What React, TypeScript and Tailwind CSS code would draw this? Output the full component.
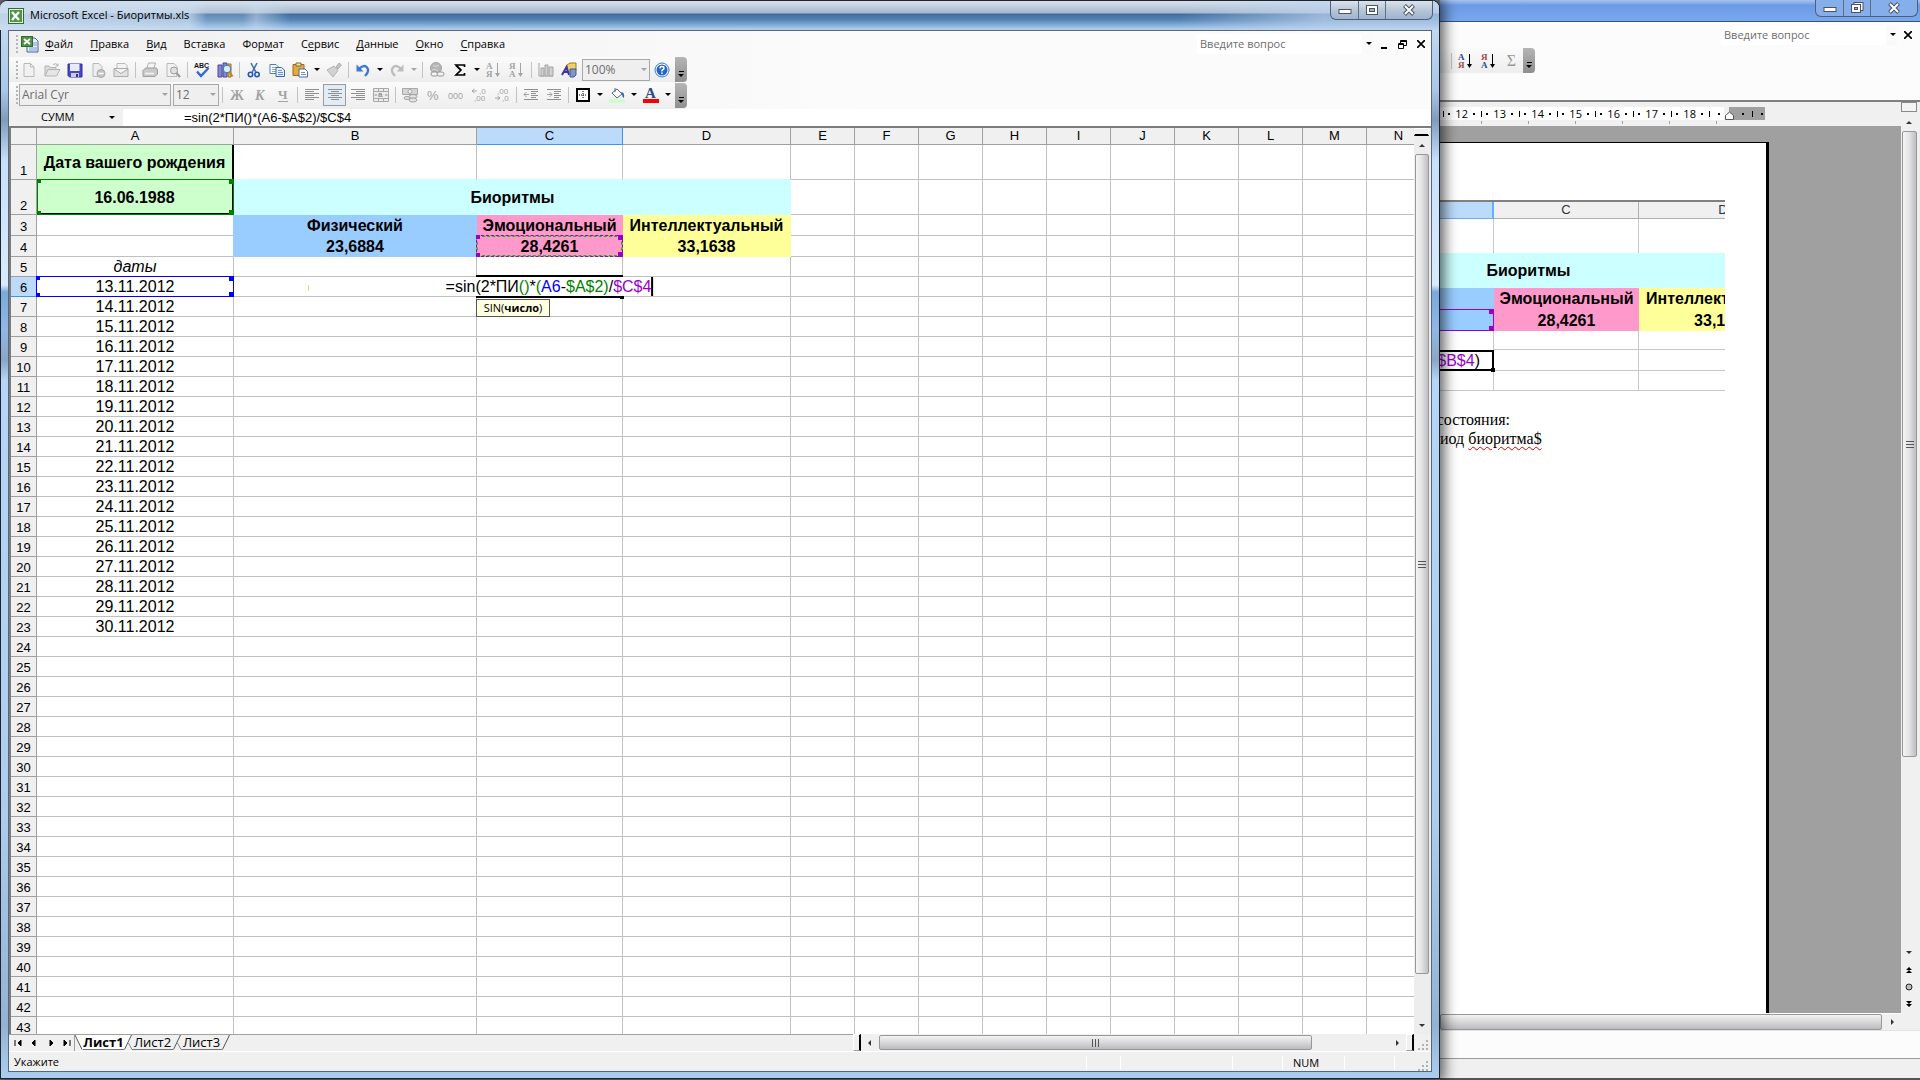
import type { ReactNode } from "react";
import clsx from "clsx";

type IconName =
  | "new" | "open" | "save" | "permission" | "mail" | "print" | "preview"
  | "spelling" | "research" | "cut" | "copy" | "paste" | "brush" | "undo"
  | "redo" | "link" | "sum" | "sortAsc" | "sortDesc" | "chart" | "drawing"
  | "help" | "bold" | "italic" | "underline" | "left" | "center" | "right"
  | "merge" | "currency" | "percent" | "thousands" | "incDecimal"
  | "decDecimal" | "outdent" | "indent" | "borders" | "fill" | "fontColor";

type Tool = IconName | "|" | "v" | "v-off";

const GRAY = "#a3a3a3";

const lines = (rows: number[][], color = "#8f8f8f") =>
  rows.map(([x, y, w]) => (
    <rect key={`${x}-${y}`} x={x} y={y} width={w} height="1" fill={color} />
  ));

const sortIcon = (top: string, bottom: string, topColor: string, bottomColor: string, arrow: string) => (
  <>
    <text x="0" y="7" fontSize="9" fontWeight="bold" fontFamily="Liberation Serif, serif" fill={topColor}>{top}</text>
    <text x="0" y="15" fontSize="9" fontWeight="bold" fontFamily="Liberation Serif, serif" fill={bottomColor}>{bottom}</text>
    <path d="M11.500 1v11" stroke={arrow} />
    <path d="M9 11h5l-2.500 4z" fill={arrow} />
  </>
);

const icons: Record<IconName, ReactNode> = {
  new: <path d="M3 1.500h6.500l3.500 3.500v9.500H3zM9.500 1.500V5H13" fill="#f1f1f1" stroke="#b9b9b9" />,
  open: (
    <>
      <path d="M1 14V4h4l1 1.500h6V8" fill="#dcdcdc" stroke="#b3b3b3" />
      <path d="M1 14l3-6.500h12L12.500 14z" fill="#e6e6e6" stroke="#b3b3b3" />
      <path d="M9 2.500q3-2 5 1m0-2v2.500h-2.500" fill="none" stroke="#b3b3b3" />
    </>
  ),
  save: (
    <>
      <path d="M1 2h14v13H2.500L1 13.500z" fill="#4747c4" stroke="#30309a" />
      <rect x="3" y="2" width="9.500" height="7" fill="#e9ecff" />
      <rect x="4" y="11" width="8" height="4" fill="#c9cde8" />
      <rect x="9" y="12" width="2" height="3" fill="#30309a" />
    </>
  ),
  permission: (
    <>
      <path d="M3 1.500h6l3 3v10H3z" fill="#eeeeee" stroke="#b9b9b9" />
      <circle cx="11" cy="11.500" r="4" fill="#c4c4c4" stroke="#a9a9a9" />
      <path d="M8.500 11.500h5" stroke="#fff" strokeWidth="1.500" />
    </>
  ),
  mail: (
    <>
      <path d="M4 6V1.500h8l2 2V6" fill="#f4f4f4" stroke="#b9b9b9" />
      <path d="M1 6.500h14v8H1zM1 7l7 4.500L15 7" fill="#e2e2e2" stroke="#ababab" />
    </>
  ),
  print: (
    <>
      <path d="M5 6l1.500-5h7L12 6" fill="#f4f4f4" stroke="#b0b0b0" />
      <path d="M1 8.500L3.500 6h11l1 2v4l-2.500 2.500H1z" fill="#c9c9c9" stroke="#9f9f9f" />
      <path d="M3 11.500h9" stroke="#f5f5f5" strokeWidth="1.500" />
    </>
  ),
  preview: (
    <>
      <path d="M2 1.500h7l3 3v10H2z" fill="#f1f1f1" stroke="#b9b9b9" />
      <circle cx="9" cy="8.500" r="3.500" fill="#e0e0e0" stroke="#9b9b9b" />
      <path d="M11.500 11l3.500 4" stroke="#9b9b9b" strokeWidth="2" />
    </>
  ),
  spelling: (
    <>
      <text x="0" y="6" fontSize="7" fontWeight="bold" fontFamily="Liberation Sans, sans-serif" fill="#111">ABC</text>
      <path d="M3 9.500l4 4.500L14.500 6" fill="none" stroke="#2f6be0" strokeWidth="2.400" />
    </>
  ),
  research: (
    <>
      <path d="M1 3h4v12H1zM6 1h4v14H6z" fill="#8a86d6" stroke="#4a4694" />
      <path d="M11 2h3v13h-3z" fill="#e6b85a" stroke="#9b6d1e" />
      <circle cx="10" cy="7" r="3.800" fill="#d7ecff" stroke="#3c74b8" />
      <path d="M12.500 10l3 4.500" stroke="#c08428" strokeWidth="2.200" />
    </>
  ),
  cut: (
    <>
      <path d="M5 1l5 9.500M11 1L6 10.500" stroke="#4470b8" strokeWidth="1.600" />
      <circle cx="4.500" cy="12.500" r="2.200" fill="none" stroke="#2454c0" strokeWidth="1.600" />
      <circle cx="11" cy="12.500" r="2.200" fill="none" stroke="#2454c0" strokeWidth="1.600" />
    </>
  ),
  copy: (
    <>
      <path d="M1 2.500h6l2 2v7H1z" fill="#fff" stroke="#4f7cc0" />
      {lines([[3, 5, 4], [3, 7, 4], [3, 9, 4]], "#86a8da")}
      <path d="M7 5.500h5.500l3 2.500v6.500H7z" fill="#e9f1fd" stroke="#3766b0" />
      {lines([[9, 8, 4], [9, 10, 5], [9, 12, 5]], "#6b93cf")}
    </>
  ),
  paste: (
    <>
      <path d="M1 2.500h11v11H1z" fill="#e5a93c" stroke="#9c6a19" />
      <path d="M4 1h5v3H4z" fill="#f3e3b4" stroke="#7b6a3e" />
      <path d="M7 7h6l2.500 2.500V15H7z" fill="#fff" stroke="#4b6ca6" />
      {lines([[9, 10, 4], [9, 12, 5]], "#6b93cf")}
    </>
  ),
  brush: (
    <>
      <path d="M10 5l3-4 2.500 2-3.500 4z" fill="#c4c4c4" stroke="#b0b0b0" />
      <path d="M1 8l7-4 4 4.500-5 6.500z" fill="#d2d2d2" stroke="#b3b3b3" />
    </>
  ),
  undo: (
    <>
      <path d="M4 7q5-5 8-1.500t-2 8.500" fill="none" stroke="#3d78d8" strokeWidth="2.400" />
      <path d="M1.500 2.500v7h7z" fill="#3d78d8" />
    </>
  ),
  redo: (
    <>
      <path d="M12 7Q7 2 4 5.500t2 8.500" fill="none" stroke="#bdbdbd" strokeWidth="2.400" />
      <path d="M14.500 2.500v7h-7z" fill="#bdbdbd" />
    </>
  ),
  link: (
    <>
      <circle cx="7" cy="6" r="5.500" fill="#b5b5b5" stroke="#a3a3a3" />
      <path d="M4 3q3 3 6 0M3 8q3-2 6 1" fill="none" stroke="#d9d9d9" />
      <rect x="2" y="10" width="7" height="4" rx="2" fill="#f3f3f3" stroke="#969696" />
      <rect x="8" y="10" width="7" height="4" rx="2" fill="#f3f3f3" stroke="#969696" />
    </>
  ),
  sum: <path d="M12.500 5V3H4l5 5-5 5h8.500v-2M4 3.500L8.500 8" fill="none" stroke="#000" strokeWidth="1.700" />,
  sortAsc: sortIcon("А", "Я", GRAY, GRAY, GRAY),
  sortDesc: sortIcon("Я", "А", GRAY, GRAY, GRAY),
  chart: (
    <>
      <path d="M1 1v13h14" fill="none" stroke="#a3a3a3" />
      <path d="M3 6h3v8H3zM7 3h3v11H7zM11 5h4v9h-4z" fill="#d0d0d0" stroke="#a3a3a3" />
    </>
  ),
  drawing: (
    <>
      <path d="M6 3l3-2h6v7l-2 2H6z" fill="#f1cf6b" stroke="#a17a21" />
      <path d="M9 7h6v6l-2 2H9z" fill="#7f97c9" stroke="#44598f" />
      <path d="M1 13l4.500-8L8 13M3 10h4" fill="none" stroke="#3c35a0" strokeWidth="2" />
    </>
  ),
  help: (
    <>
      <circle cx="8" cy="8" r="7" fill="#fff" stroke="#3c74c8" />
      <circle cx="8" cy="8" r="5.500" fill="#2363cc" />
      <path d="M6 6.500q0-2 2-2t2 1.700q0 1-1.200 1.500T8 9.500M8 10.500v1.500" fill="none" stroke="#fff" strokeWidth="1.500" />
    </>
  ),
  bold: <text x="1" y="13" fontSize="14" fontWeight="bold" fontFamily="Liberation Serif, serif" fill={GRAY}>Ж</text>,
  italic: <text x="3" y="13" fontSize="14" fontWeight="bold" fontStyle="italic" fontFamily="Liberation Serif, serif" fill={GRAY}>К</text>,
  underline: (
    <>
      <text x="3" y="12" fontSize="13" fontWeight="bold" fontFamily="Liberation Serif, serif" fill={GRAY}>Ч</text>
      <rect x="3" y="14" width="10" height="1" fill={GRAY} />
    </>
  ),
  left: lines([[1, 2, 14], [1, 4, 9], [1, 6, 14], [1, 8, 9], [1, 10, 14], [1, 12, 9]]),
  center: lines([[1, 2, 14], [4, 4, 8], [1, 6, 14], [4, 8, 8], [1, 10, 14], [4, 12, 8]]),
  right: lines([[1, 2, 14], [6, 4, 9], [1, 6, 14], [6, 8, 9], [1, 10, 14], [6, 12, 9]]),
  merge: (
    <>
      <path d="M.5 1.500h15v13H.5zM.5 4.500h15M.5 11.500h15M5.500 1.500v3M10.500 1.500v3M5.500 11.500v3M10.500 11.500v3" fill="#ececec" stroke="#a8a8a8" />
      <text x="5" y="10" fontSize="8" fontWeight="bold" fontFamily="Liberation Sans, sans-serif" fill="#8f8f8f">a</text>
      <path d="M1.500 8H4M12 8h2.500" stroke="#8f8f8f" />
    </>
  ),
  currency: (
    <>
      <path d="M.5 1.500h15v6H.5z" fill="#d4d4d4" stroke="#a8a8a8" />
      <circle cx="8" cy="4.500" r="2" fill="#f0f0f0" stroke="#a8a8a8" />
      <ellipse cx="11" cy="9.500" rx="4" ry="2" fill="#e2e2e2" stroke="#a3a3a3" />
      <ellipse cx="11" cy="13" rx="4" ry="2" fill="#e2e2e2" stroke="#a3a3a3" />
      <ellipse cx="5" cy="11" rx="3" ry="1.500" fill="#e2e2e2" stroke="#a3a3a3" />
    </>
  ),
  percent: <text x="2" y="13" fontSize="13" fontFamily="Liberation Sans, sans-serif" fill={GRAY}>%</text>,
  thousands: <text x="0" y="12" fontSize="9" fontFamily="Liberation Sans, sans-serif" fill={GRAY}>000</text>,
  incDecimal: (
    <>
      <path d="M1 4h5M1 4l2.500-2M1 4l2.500 2" fill="none" stroke={GRAY} />
      <text x="8" y="7" fontSize="8" fontFamily="Liberation Sans, sans-serif" fill={GRAY}>,0</text>
      <text x="3" y="14" fontSize="8" fontFamily="Liberation Sans, sans-serif" fill={GRAY}>,00</text>
    </>
  ),
  decDecimal: (
    <>
      <text x="3" y="7" fontSize="8" fontFamily="Liberation Sans, sans-serif" fill={GRAY}>,00</text>
      <path d="M1 11h5M6 11L3.500 9M6 11l-2.500 2" fill="none" stroke={GRAY} />
      <text x="8" y="14" fontSize="8" fontFamily="Liberation Sans, sans-serif" fill={GRAY}>,0</text>
    </>
  ),
  outdent: (
    <>
      {lines([[1, 2, 14], [8, 4, 7], [8, 6, 5], [8, 8, 7], [8, 10, 5], [1, 12, 14]])}
      <path d="M1 7.500h5M1 7.500L3.500 5M1 7.500L3.500 10" fill="none" stroke={GRAY} />
    </>
  ),
  indent: (
    <>
      {lines([[1, 2, 14], [8, 4, 7], [8, 6, 5], [8, 8, 7], [8, 10, 5], [1, 12, 14]])}
      <path d="M1 7.500h5M6 7.500L3.500 5M6 7.500L3.500 10" fill="none" stroke={GRAY} />
    </>
  ),
  borders: (
    <>
      <rect x="2" y="2" width="12" height="12" fill="#fff" stroke="#000" strokeWidth="2" />
      <path d="M8 4v8M4 8h8" stroke="#000" strokeDasharray="1 1" />
    </>
  ),
  fill: (
    <>
      <path d="M3 6l5-4 5 5-5 4z" fill="#fff" stroke="#56657f" />
      <path d="M6 5V1" stroke="#56657f" />
      <path d="M12 5q4 0 3 6-2-1-2-4z" fill="#2f65c4" />
      <rect x="0" y="12" width="16" height="4" fill="#ccffcc" />
    </>
  ),
  fontColor: (
    <>
      <text x="2" y="11" fontSize="15" fontWeight="bold" fontFamily="Liberation Serif, serif" fill="#2b4a8c">A</text>
      <rect x="0" y="12" width="16" height="4" fill="#f00" />
    </>
  ),
};

const standardTools: Tool[] = [
  "new", "open", "save", "permission", "mail", "|", "print", "preview", "|",
  "spelling", "research", "|", "cut", "copy", "paste", "v", "brush", "|",
  "undo", "v", "redo", "v-off", "|", "link", "sum", "v", "sortAsc",
  "sortDesc", "|", "chart", "drawing",
];

const formatTools: Tool[] = [
  "|", "bold", "italic", "underline", "|", "left", "center", "right", "merge",
  "|", "currency", "percent", "thousands", "incDecimal", "decDecimal", "|",
  "outdent", "indent", "|", "borders", "v", "fill", "v", "fontColor", "v",
];

const menus = [
  ["", "Ф", "айл"],
  ["", "П", "равка"],
  ["", "В", "ид"],
  ["Вст", "а", "вка"],
  ["Фор", "м", "ат"],
  ["С", "е", "рвис"],
  ["", "Д", "анные"],
  ["", "О", "кно"],
  ["", "С", "правка"],
];

function Icon({ name }: { name: IconName }) {
  return (
    <svg width="16" height="16" viewBox="0 0 16 16" className="overflow-visible" aria-hidden="true">
      {icons[name]}
    </svg>
  );
}

function Arrow({ dir = "down", className = "fill-black" }: { dir?: "down" | "up" | "left" | "right"; className?: string }) {
  const shapes = {
    down: "M1 2h6L4 5z",
    up: "M1 6h6L4 3z",
    left: "M5 1v6L2 4z",
    right: "M3 1v6l3-3z",
  };
  return (
    <svg width="8" height="8" viewBox="0 0 8 8" className={className} aria-hidden="true">
      <path d={shapes[dir]} />
    </svg>
  );
}

function Tools({ items }: { items: Tool[] }) {
  return items.map((item, i) => {
    if (item === "|") {
      return (
        <span key={i} className="flex w-1.5 justify-center">
          <span className="h-4 w-px bg-[#c3c3c3]" />
        </span>
      );
    }
    if (item === "v" || item === "v-off") {
      return (
        <button key={i} aria-label="Ещё" className="flex w-[11px] justify-center">
          <Arrow className={item === "v" ? "fill-black" : "fill-[#a3a3a3]"} />
        </button>
      );
    }
    return (
      <button
        key={i}
        aria-label={item}
        className={clsx(
          "flex h-[22px] w-[23px] items-center justify-center",
          item === "center" && "border border-[#9c9c9c] bg-[#e1ecf7]"
        )}
      >
        <Icon name={item} />
      </button>
    );
  });
}

function Grip() {
  return (
    <span className="flex w-2 flex-col items-center gap-0.5">
      {[0, 1, 2, 3, 4].map((n) => (
        <span key={n} className="size-0.5 bg-[#b5b5b5]" />
      ))}
    </span>
  );
}

function ToolbarEnd() {
  return (
    <button
      aria-label="Параметры панели"
      className="flex w-3 flex-col items-center justify-end self-stretch rounded-r-sm bg-linear-to-b from-[#b5b5b5] to-[#8f8f8f] pb-0.5"
    >
      <span className="h-px w-[5px] bg-black" />
      <Arrow />
    </button>
  );
}

function Combo({ label, value, className }: { label: string; value: string; className: string }) {
  return (
    <span className={clsx("relative flex h-[22px]", className)}>
      <select
        aria-label={label}
        className="w-full appearance-none border border-[#a8a8a8] bg-[#efefef] px-0.5 text-xs text-[#6d6d6d]"
      >
        <option>{value}</option>
      </select>
      <span className="pointer-events-none absolute right-0.5 top-[7px]">
        <Arrow className="fill-[#a3a3a3]" />
      </span>
    </span>
  );
}

function AskBox() {
  return (
    <div className="flex h-5 w-44 items-center bg-white">
      <input
        aria-label="Введите вопрос"
        placeholder="Введите вопрос"
        className="min-w-0 flex-1 px-[3px] text-[11px] placeholder:text-[#6d6d6d]"
      />
      <button aria-label="Список" className="flex h-full w-[11px] items-center justify-end bg-[#fafafa]">
        <Arrow />
      </button>
    </div>
  );
}

function CaptionButtons({ restore = false }: { restore?: boolean }) {
  return (
    <div
      className={clsx(
        "flex w-[103px] divide-x divide-[#5d6f87] overflow-hidden rounded-b-md border border-t-0 border-[#4e6078]",
        restore ? "h-[17px] bg-[#86aeea]" : "h-[19px] bg-linear-to-b from-[#dbe3ec] via-[#b8c6d6] to-[#9db4d0]"
      )}
    >
      <button aria-label="Свернуть" className="flex w-7 items-center justify-center">
        <svg width="14" height="8" viewBox="0 0 14 8">
          <rect x="1" y="3.500" width="12" height="4" fill="#fff" stroke="#4b5362" />
        </svg>
      </button>
      <button aria-label="Развернуть" className="flex w-[27px] items-center justify-center">
        <svg width="14" height="12" viewBox="0 0 14 12" fill="#fff" stroke="#4b5362">
          {restore ? (
            <>
              <rect x="4" y=".5" width="9" height="8" />
              <rect x="1.500" y="2.500" width="9" height="8" />
              <rect x="4.500" y="5.500" width="3" height="2" fill="#9db4d0" />
            </>
          ) : (
            <>
              <rect x="1.500" y="1.500" width="11" height="9" />
              <rect x="4.500" y="4.500" width="5" height="3" fill="#9db4d0" />
            </>
          )}
        </svg>
      </button>
      <button aria-label="Закрыть" className="flex flex-1 items-center justify-center">
        <svg width="14" height="12" viewBox="0 0 14 12">
          <path d="M2.500 1.500L11.500 10.500M11.500 1.500L2.500 10.500" stroke="#4b5362" strokeWidth="4" />
          <path d="M3 2L11 10M11 2L3 10" stroke="#fff" strokeWidth="2" />
        </svg>
      </button>
    </div>
  );
}

function TitleBar() {
  return (
    <header className="flex h-[29px] justify-between bg-[linear-gradient(to_right,rgb(205_222_240/0.9),rgb(205_222_240/0.75)_190px,rgb(205_222_240/0.25)_207px,rgb(205_222_240/0.25)_243px,rgb(205_222_240/0.55)_256px,transparent_290px,transparent_82%,rgb(190_212_238/0.7)_92%),linear-gradient(to_bottom,#d9e1eb,#a4b8cf_12px,#3f6c9c_13px,#5585b6_19px,#b4d3f3)] pl-2 pr-1.5">
      <div className="flex items-center gap-1.5">
        <svg width="16" height="16" viewBox="0 0 16 16" aria-hidden="true">
          <rect x=".5" y=".5" width="15" height="15" fill="#e8f2e4" stroke="#2f6b2c" />
          <rect x="2" y="2" width="12" height="12" fill="#4d9447" />
          <path d="M4 4l7 8M11 4l-7 8" stroke="#fff" strokeWidth="2.500" />
        </svg>
        <h1 className="text-[11px] text-black">Microsoft Excel - Биоритмы.xls</h1>
      </div>
      <CaptionButtons />
    </header>
  );
}

function MenuBar() {
  return (
    <div className="flex h-[26px] items-center pl-1">
      <Grip />
      <svg width="18" height="18" viewBox="0 0 18 18" aria-hidden="true">
        <path d="M6 3h8l3 3v11H6z" fill="#e6eefb" stroke="#49629a" />
        <path d="M12 8h4M12 10h4M8 13h8M8 15h8" stroke="#7f9cd0" />
        <rect x=".5" y="1.500" width="11" height="10" fill="#4d9447" stroke="#2f6b2c" />
        <path d="M3 4l6 5M9 4L3 9" stroke="#fff" strokeWidth="1.800" />
      </svg>
      <nav className="-ml-0.5 flex flex-1 gap-px" aria-label="Меню">
        {menus.map(([before, key, after]) => (
          <button key={before + key + after} className="px-2 text-[11px] text-black">
            {before}
            <u className="underline-offset-2">{key}</u>
            {after}
          </button>
        ))}
      </nav>
      <AskBox />
      <div className="flex w-[58px] items-center justify-between pl-2 pr-1.5">
        <button aria-label="Свернуть книгу">
          <svg width="6" height="10" viewBox="0 0 6 10"><path d="M0 8h6v2H0z" /></svg>
        </button>
        <button aria-label="Восстановить книгу">
          <svg width="9" height="9" viewBox="0 0 9 9" fill="none" stroke="#000">
            <path d="M2.500 3V.5h6v5H6M2.500 1.500h6M.5 3.500h5v5h-5zM.5 4.500h5" />
          </svg>
        </button>
        <button aria-label="Закрыть книгу">
          <svg width="8" height="8" viewBox="0 0 8 8"><path d="M0 0l8 8M8 0L0 8" stroke="#000" strokeWidth="1.700" /></svg>
        </button>
      </div>
    </div>
  );
}

function Toolbars() {
  return (
    <>
      <div className="flex h-[25px] w-[678px] items-center bg-linear-to-b from-[#fbfbfb] to-[#ededed] pl-1">
        <Grip />
        <span className="-ml-1 flex items-center">
          <Tools items={standardTools} />
        </span>
        <Combo label="Масштаб" value="100%" className="ml-0.5 w-[68px]" />
        <button aria-label="Справка" className="flex w-6 justify-center">
          <Icon name="help" />
        </button>
        <span className="ml-auto flex self-stretch">
          <ToolbarEnd />
        </span>
      </div>
      <div className="flex h-[27px] w-[678px] items-center bg-linear-to-b from-[#fbfbfb] to-[#ededed] pb-px pl-1">
        <Grip />
        <Combo label="Шрифт" value="Arial Cyr" className="-ml-0.5 w-[152px]" />
        <Combo label="Размер" value="12" className="ml-0.5 w-[46px]" />
        <Tools items={formatTools} />
        <span className="ml-auto flex self-stretch pt-px">
          <ToolbarEnd />
        </span>
      </div>
    </>
  );
}

function FormulaBar() {
  return (
    <div className="flex h-[17px] bg-white">
      <div className="flex w-[114px] items-center justify-between bg-[#f0f0f0] pl-8 pr-[7px]">
        <span className="text-[11px]">СУММ</span>
        <button aria-label="Имена">
          <Arrow />
        </button>
      </div>
      <input
        aria-label="Строка формул"
        defaultValue="=sin(2*ПИ()*(A6-$A$2)/$C$4"
        className="flex-1 pl-[61px] font-['Liberation_Sans',Arial,sans-serif] text-[13px]"
      />
    </div>
  );
}

function Handles({ className }: { className: string }) {
  return (
    <>
      <span className={clsx("absolute -left-px -top-px size-1", className)} />
      <span className={clsx("absolute -right-px -top-px size-[5px]", className)} />
      <span className={clsx("absolute -bottom-px -left-px size-1", className)} />
      <span className={clsx("absolute -bottom-px -right-px size-[5px]", className)} />
    </>
  );
}

function CellEditor() {
  return (
    <>
      <span className="absolute -inset-x-px -bottom-0.5 -top-0.5 z-10 border-y-2 border-black" />
      <span className="absolute -bottom-[3px] -right-0.5 z-20 size-1 bg-black" />
      <span className="absolute left-1/2 top-0 z-20 flex h-[19px] -translate-x-1/2 whitespace-nowrap border-r-2 border-black bg-white text-left">
        =sin(2*ПИ<span className="text-[#008000]">()</span>*
        <span className="text-[#008000]">(</span>
        <span className="text-[#0000ff]">A6</span>-
        <span className="text-[#008000]">$A$2)</span>/
        <span className="text-[#9900cc]">$C$4</span>
      </span>
      <span className="absolute -left-px top-[22px] z-20 h-[18px] w-[74px] border border-[#555] bg-[#ffffe1] text-center font-['Open_Sans','Noto_Sans',sans-serif] text-[11px] leading-4">
        SIN(<b>число</b>)
      </span>
    </>
  );
}

const columns = ["A", "B", "C", "D", "E", "F", "G", "H", "I", "J", "K", "L", "M", "N"];
const rowHeights: Record<number, string> = { 1: "h-[35px]", 2: "h-[35px]", 3: "h-[21px]", 4: "h-[21px]" };

type Cell = { text?: ReactNode; className: string };

const blue = "border-[#99ccff] bg-[#99ccff] font-bold";
const pink = "border-[#ff99cc] bg-[#ff99cc] font-bold";
const yellow = "border-[#ffff99] bg-[#ffff99] font-bold";

const cells: Record<string, Cell> = {
  A1: { text: "Дата вашего рождения", className: "border-b-[#008000] border-r-black border-r-2 bg-[#ccffcc] font-bold" },
  B1: { className: "border-r-[#c0c0c0] border-b-[#ccffff]" },
  C1: { className: "border-r-[#c0c0c0] border-b-[#ccffff]" },
  D1: { className: "border-r-[#c0c0c0] border-b-[#ccffff]" },
  A2: {
    text: (
      <>
        16.06.1988
        <span className="absolute -bottom-px -right-0.5 -top-px left-0 border border-[#008000] shadow-[inset_-1px_-1px_0_#000]">
          <Handles className="bg-[#008000]" />
        </span>
      </>
    ),
    className: "border-black border-r-2 bg-[#ccffcc] font-bold",
  },
  A3: { className: "border-b-[#c0c0c0] border-r-[#99ccff]" },
  A4: { className: "border-b-[#c0c0c0] border-r-[#99ccff]" },
  B3: { text: "Физический", className: blue },
  C3: { text: "Эмоциональный", className: pink },
  D3: { text: "Интеллектуальный", className: yellow },
  B4: { text: "23,6884", className: blue },
  C4: {
    text: (
      <>
        28,4261
        <span className="absolute -inset-px border border-[#66e033] outline-1 -outline-offset-2 outline-dashed outline-[#40a040]">
          <span className="absolute -inset-px border border-dashed border-[#9900cc]" />
          <Handles className="bg-[#9900cc]" />
        </span>
      </>
    ),
    className: pink,
  },
  D4: { text: "33,1638", className: yellow },
  A5: { text: "даты", className: "border-[#c0c0c0] italic" },
  A6: {
    text: (
      <>
        13.11.2012
        <span className="absolute -inset-px border border-[#0000ff]">
          <Handles className="bg-[#0000ff]" />
        </span>
      </>
    ),
    className: "border-[#c0c0c0]",
  },
  B6: {
    text: <span className="absolute left-[74px] top-2 h-1.5 w-px bg-[#ffc680]" />,
    className: "border-[#c0c0c0]",
  },
  C6: { text: <CellEditor />, className: "border-[#c0c0c0]" },
};

function Sheet() {
  const rows = Array.from({ length: 43 }, (_, i) => i + 1);
  return (
    <table className="w-[1420px] table-fixed border-separate border-spacing-0 bg-white text-center font-['Liberation_Sans',Arial,sans-serif] text-base leading-[19px]">
      <colgroup>
        <col className="w-[26px]" />
        <col className="w-[197px]" />
        <col className="w-[243px]" />
        <col className="w-[146px]" />
        <col className="w-[168px]" />
        {columns.slice(4).map((c) => (
          <col key={c} className="w-16" />
        ))}
      </colgroup>
      <thead>
        <tr className="h-[17px] text-[13px] leading-4">
          <th className="border-b border-r border-[#a0a0a0] bg-[#f0f0f0] p-0" />
          {columns.map((c) => (
            <th
              key={c}
              className={clsx(
                "border-b border-r p-0 font-normal",
                c === "C" ? "border-[#3f93f0] bg-[#bcdafa]" : "border-[#a0a0a0] bg-[#f0f0f0]"
              )}
            >
              {c}
            </th>
          ))}
        </tr>
      </thead>
      <tbody>
        {rows.map((row) => (
          <tr key={row} className={rowHeights[row] ?? "h-5"}>
            <th
              className={clsx(
                "border-b border-r p-0 align-bottom text-[13px] font-normal leading-4",
                row === 6 ? "border-[#3f93f0] bg-[#bcdafa]" : "border-[#a0a0a0] bg-[#f0f0f0]"
              )}
            >
              {row}
            </th>
            {columns.map((col) => {
              if (row === 2 && (col === "C" || col === "D")) return null;
              if (row === 2 && col === "B") {
                return (
                  <td key={col} colSpan={3} className="bg-[#ccffff] p-0 font-bold">
                    Биоритмы
                  </td>
                );
              }
              const cell = cells[col + row];
              const date = col === "A" && row > 6 && row < 24 ? `${row + 7}.11.2012` : null;
              return (
                <td
                  key={col}
                  className={clsx("relative whitespace-nowrap border-b border-r p-0", cell?.className ?? "border-[#c0c0c0]")}
                >
                  {cell?.text ?? date}
                </td>
              );
            })}
          </tr>
        ))}
      </tbody>
    </table>
  );
}

function GripLines({ vertical = false }: { vertical?: boolean }) {
  return (
    <svg width="8" height="8" viewBox="0 0 8 8" stroke="#555" className={vertical ? "rotate-90" : ""} aria-hidden="true">
      <path d="M1.500 0v8M4.500 0v8M7.500 0v8" />
    </svg>
  );
}

const vThumb = "flex items-center justify-center rounded-xs border border-[#979797] bg-linear-to-r from-[#f5f5f5] via-[#e2e2e4] to-[#bebec3]";
const hThumb = "flex items-center justify-center rounded-xs border border-[#979797] bg-linear-to-b from-[#f3f3f3] via-[#d8d8da] to-[#bcbcc0]";

function SheetTabs() {
  return (
    <div className="flex h-[17px] bg-[#f0f0f0]">
      <div className="flex flex-1 border-t border-[#a0a0a0] pl-0.5">
        <div className="flex w-16 items-center justify-between border-r border-[#a0a0a0] px-[3px]">
          {["M1 1v6M7 1v6L4 4z", "M5 1v6L2 4z", "M3 1v6l3-3z", "M7 1v6M1 1v6l3-3z"].map((d) => (
            <button key={d} aria-label="Прокрутка листов">
              <svg width="8" height="8" viewBox="0 0 8 8" stroke="#000" aria-hidden="true">
                <path d={d} />
              </svg>
            </button>
          ))}
        </div>
        <svg width="8" height="15" viewBox="0 0 8 15" aria-hidden="true">
          <path d="M0 0l7 14.500h1V0z" fill="#fff" />
          <path d="M0 0l7 14.500" stroke="#555" />
        </svg>
        {["Лист1", "Лист2", "Лист3"].map((sheet, i) => (
          <div key={sheet} className="flex">
            <button
              className={clsx(
                "h-[15px] w-[41px] border-b border-[#777] text-[13px] leading-[14px]",
                i === 0 && "bg-white font-bold"
              )}
            >
              {sheet}
            </button>
            <svg width="8" height="15" viewBox="0 0 8 15" aria-hidden="true">
              {i === 0 && <path d="M0 0h8L1 14.500H0z" fill="#fff" />}
              <path d="M7.500 0L.5 14.500" stroke="#555" />
              {i < 2 && <path d="M4.500 8l3.500 6.500" stroke="#888" />}
            </svg>
          </div>
        ))}
      </div>
      <div className="flex w-[578px]">
        <span className="w-2 border border-r-2 border-white border-b-[#a0a0a0] border-r-black" />
        <button aria-label="Влево" className="flex w-[18px] items-center justify-center">
          <Arrow dir="left" className="fill-[#333]" />
        </button>
        <div className="flex flex-1 py-px">
          <div className={clsx(hThumb, "w-[85%]")}>
            <GripLines />
          </div>
        </div>
        <button aria-label="Вправо" className="flex w-[18px] items-center justify-center">
          <Arrow dir="right" className="fill-[#333]" />
        </button>
        <span className="w-2 border border-r-2 border-white border-b-[#a0a0a0] border-r-black" />
        <SizeGrip />
      </div>
    </div>
  );
}

function SizeGrip() {
  return (
    <svg width="17" height="16" viewBox="0 0 17 16" fill="#b0b0b0" aria-hidden="true">
      <path d="M12 6h2v2h-2zM8 10h2v2H8zM12 10h2v2h-2zM4 14h2v2H4zM8 14h2v2H8zM12 14h2v2h-2z" />
    </svg>
  );
}

function ExcelWindow() {
  return (
    <section
      aria-label="Microsoft Excel"
      className="absolute bottom-px left-0 top-0 flex w-3/4 flex-col overflow-hidden rounded-t-lg border-y border-r border-[#1c2430] bg-[#abcdef] shadow-[0_0_14px_4px_rgb(0_0_0/0.65)]"
    >
      <div className="flex min-h-0 flex-1 flex-col">
        <TitleBar />
        <div className="flex min-h-0 flex-1 border-l border-[#1c2430] bg-[linear-gradient(to_bottom,#c0d8f2,#a9c7e6_60px,#7f9cbb_90px,#c6e0fb_130px,#d9ebfa_255px,#79a9de_262px,#8fb8e8_300px,#8ba6c4_330px,#b5d6f8_350px,#aecdee_75%,#94b3d4_95%,#abcdef)] pb-1.5 pl-[7px] pr-[7px]">
          <div className="flex min-w-0 flex-1 flex-col border border-[#56677c] bg-linear-to-r from-[#f0f0f0] to-[#fbfbfb] to-60%">
            <MenuBar />
            <Toolbars />
            <FormulaBar />
            <div className="flex min-h-0 flex-1 border-l-2 border-t-2 border-[#7c7c7c]">
              <div className="min-w-0 flex-1 overflow-hidden">
                <Sheet />
              </div>
              <div className="flex w-[17px] flex-col bg-[#ededed] pr-0.5">
                <span className="h-2 border border-b-2 border-white border-b-black bg-[#f0f0f0]" />
                <button aria-label="Вверх" className="flex h-[18px] items-center justify-center">
                  <Arrow dir="up" className="fill-[#333]" />
                </button>
                <div className="flex-1 pl-px">
                  <div className={clsx(vThumb, "h-[95%]")}>
                    <GripLines vertical />
                  </div>
                </div>
                <button aria-label="Вниз" className="flex h-[17px] items-center justify-center">
                  <Arrow className="fill-[#333]" />
                </button>
              </div>
            </div>
            <SheetTabs />
            <footer className="flex h-5 items-center border-t border-white bg-[#f0f0f0] pl-[5px] pt-0.5 text-[11px]">
              <span className="flex-1">Укажите</span>
              <span className="flex h-3.5 w-[328px] divide-x divide-white border-l border-white leading-[14px]">
                <span className="w-[34px]" />
                <span className="w-[112px]" />
                <span className="w-[50px]" />
                <span className="w-[62px] pl-2.5">NUM</span>
                <span className="w-[50px]" />
                <span />
              </span>
              <SizeGrip />
            </footer>
          </div>
        </div>
      </div>
    </section>
  );
}

function Ruler() {
  return (
    <div className="h-6 bg-[#f0f0f0] pt-[5px]">
      <div className="flex h-[13px] text-[11px] leading-[13px]">
        <div className="flex w-[285px] bg-white pl-[3px]">
          {[12, 13, 14, 15, 16, 17, 18].map((n) => (
            <span key={n} className="flex w-[38px] shrink-0 items-center justify-between pr-1.5">
              <span className="h-1.5 w-px bg-black" />
              <span className="size-0.5 bg-black" />
              <span className="w-3.5 text-center">{n}</span>
              <span className="size-0.5 bg-black" />
            </span>
          ))}
          <span className="flex items-center gap-2">
            <span className="h-1.5 w-px bg-black" />
            <span className="size-0.5 bg-black" />
          </span>
        </div>
        <div className="flex w-10 items-center gap-2 bg-[#a0a0a0]">
          <svg width="9" height="13" viewBox="0 0 9 13" className="overflow-visible" aria-hidden="true">
            <path d="M-1 0h5v13h-5z" fill="#f0f0f0" />
            <path d="M.5 12.500v-4l4-3.500 4 3.500v4z" fill="#fff" stroke="#555" />
          </svg>
          <span className="size-0.5 bg-black" />
          <span className="h-1.5 w-px bg-black" />
          <span className="size-0.5 bg-black" />
        </div>
      </div>
      <div className="flex gap-[46px] pl-[41px] pt-px">
        {[0, 1, 2, 3, 4, 5].map((n) => (
          <span key={n} className="h-[3px] w-px bg-[#a0a0a0]" />
        ))}
      </div>
    </div>
  );
}

function PastedTable() {
  return (
    <div className="w-[285px] overflow-hidden">
      <table className="-ml-[190px] w-[557px] table-fixed border-separate border-spacing-0 border-t-2 border-t-[#808080] text-center font-['Liberation_Sans',Arial,sans-serif] text-base leading-[19px]">
        <colgroup>
          <col className="w-[244px]" />
          <col className="w-[145px]" />
          <col className="w-[168px]" />
        </colgroup>
        <thead>
          <tr className="h-[17px] text-[13px] leading-4 text-[#333]">
            <th className="border-b border-r-2 border-[#66b0fa] bg-[#bcdafa] p-0 font-normal" />
            <th className="border-b border-r border-[#b0b0b0] bg-[#f0f0f0] p-0 font-normal">C</th>
            <th className="border-b border-[#b0b0b0] bg-[#f0f0f0] p-0 font-normal">D</th>
          </tr>
        </thead>
        <tbody>
          <tr className="h-[34px]">
            <td className="border-r border-[#c8c8c8]" />
            <td className="border-r border-[#c8c8c8]" />
            <td />
          </tr>
          <tr className="h-[35px]">
            <td colSpan={3} className="bg-[#ccffff] p-0 font-bold">Биоритмы</td>
          </tr>
          <tr className="h-[21px] font-bold">
            <td className="bg-[#99ccff] p-0">Физический</td>
            <td className="bg-[#ff99cc] p-0">Эмоциональный</td>
            <td className="bg-[#ffff99] p-0">Интеллектуальный</td>
          </tr>
          <tr className="h-[22px] font-bold">
            <td className="relative bg-[#99ccff] p-0">
              23,6884
              <span className="absolute inset-0 border border-[#9900cc]">
                <Handles className="bg-[#9900cc]" />
              </span>
            </td>
            <td className="bg-[#ff99cc] p-0">28,4261</td>
            <td className="bg-[#ffff99] p-0">33,1638</td>
          </tr>
          <tr className="h-[19px]">
            <td className="border-r border-[#c8c8c8] p-0" />
            <td className="border-b border-r border-[#c8c8c8] p-0" />
            <td className="border-b border-[#c8c8c8] p-0" />
          </tr>
          <tr className="h-[21px]">
            <td className="relative border-2 border-black p-0 pr-3 text-right leading-[17px]">
              <span className="text-[#9900cc]">$B$4</span>)
              <span className="absolute -bottom-[3px] -right-[3px] size-1 bg-black" />
            </td>
            <td className="border-b border-r border-[#c8c8c8] p-0" />
            <td className="border-b border-[#c8c8c8] p-0" />
          </tr>
          <tr className="h-5">
            <td className="border-b border-r border-[#c8c8c8] p-0" />
            <td className="border-b border-r border-[#c8c8c8] p-0" />
            <td className="border-b border-[#c8c8c8] p-0" />
          </tr>
        </tbody>
      </table>
    </div>
  );
}

function WordWindow() {
  return (
    <section aria-label="Документ" className="absolute inset-y-0 right-0 flex w-1/4 flex-col bg-[#fcfcfc]">
      <header className="flex h-[22px] justify-end border-b border-[#3a5277] bg-linear-to-b from-[#a8c4f0] from-0% via-[#6c9be4] via-25% to-[#78a8ee] pr-0.5">
        <CaptionButtons restore />
      </header>
      <div className="flex h-[26px] items-center justify-end pr-2">
        <AskBox />
        <button aria-label="Закрыть документ" className="pl-[7px]">
          <svg width="8" height="8" viewBox="0 0 8 8"><path d="M0 0l8 8M8 0L0 8" stroke="#000" strokeWidth="1.700" /></svg>
        </button>
      </div>
      <div className="mb-[27px] flex h-[25px] w-[95px] items-center justify-end bg-linear-to-b from-[#fbfbfb] to-[#ededed]">
        <Tools items={["|"]} />
        <button aria-label="По возрастанию" className="flex w-[23px] justify-center">
          <svg width="16" height="16" viewBox="0 0 16 16" className="overflow-visible">{sortIcon("А", "Я", "#2b4a8c", "#a04848", "#000")}</svg>
        </button>
        <button aria-label="По убыванию" className="flex w-[23px] justify-center">
          <svg width="16" height="16" viewBox="0 0 16 16" className="overflow-visible">{sortIcon("Я", "А", "#a04848", "#2b4a8c", "#000")}</svg>
        </button>
        <button aria-label="Автосумма" className="flex w-[23px] justify-center font-['Liberation_Serif',serif] text-base leading-5 text-[#999]">
          Σ
        </button>
        <ToolbarEnd />
      </div>
      <div className="flex min-h-0 flex-1 border-t-2 border-[#808080]">
        <div className="flex min-w-0 flex-1 flex-col">
          <Ruler />
          <div className="min-h-0 flex-1 overflow-hidden bg-[#a0a0a0] pt-4">
            <article className="h-full w-[329px] border-r-[3px] border-t border-black bg-white pt-[57px]">
              <PastedTable />
              <div className="-ml-2 pt-[19px] font-['Liberation_Serif','Times_New_Roman',serif] text-base leading-[19px]">
                <p className="w-[78px] text-right">состояния:</p>
                <p className="whitespace-nowrap">
                  риод{" "}
                  <span className="underline decoration-[#e00000] decoration-wavy decoration-1 underline-offset-2">
                    биоритма$
                  </span>
                </p>
              </div>
            </article>
          </div>
          <div className="flex h-[17px] border-t border-white bg-[#f0f0f0]">
            <div className={clsx(hThumb, "flex-1")} />
            <button aria-label="Вправо" className="flex w-[19px] items-center justify-center">
              <Arrow dir="right" className="fill-[#333]" />
            </button>
          </div>
        </div>
        <div className="flex w-[19px] flex-col bg-[#f0f0f0] pr-[3px]">
          <span className="h-2.5 border border-[#8a8a8a] bg-[#f4f4f4]" />
          <button aria-label="Вверх" className="flex h-[19px] items-center justify-center">
            <Arrow dir="up" className="fill-[#333]" />
          </button>
          <div className="flex-1 pl-px">
            <div className={clsx(vThumb, "h-[77%]")}>
              <GripLines vertical />
            </div>
          </div>
          <button aria-label="Вниз" className="flex h-[18px] items-center justify-center">
            <Arrow className="fill-[#333]" />
          </button>
          <div className="flex h-[68px] flex-col items-center gap-[9px] pt-1">
            <svg width="8" height="8" viewBox="0 0 8 8"><path d="M1 4l3-3 3 3zM1 7l3-3 3 3z" /></svg>
            <svg width="8" height="8" viewBox="0 0 8 8"><circle cx="4" cy="4" r="3" fill="#bbb" stroke="#222" /></svg>
            <svg width="8" height="8" viewBox="0 0 8 8"><path d="M1 1l3 3 3-3zM1 4l3 3 3-3z" /></svg>
          </div>
        </div>
      </div>
      <div className="h-[28px] border-t border-[#e3e3e3]" />
      <footer className="h-[22px] border-b-2 border-t border-b-[#555] border-t-[#9a9a9a] bg-[#f0f0f0]" />
    </section>
  );
}

export default function App() {
  return (
    <main className="relative h-screen overflow-hidden bg-[#8a8f96] font-['Open_Sans','Noto_Sans',sans-serif] text-black">
      <WordWindow />
      <ExcelWindow />
    </main>
  );
}
